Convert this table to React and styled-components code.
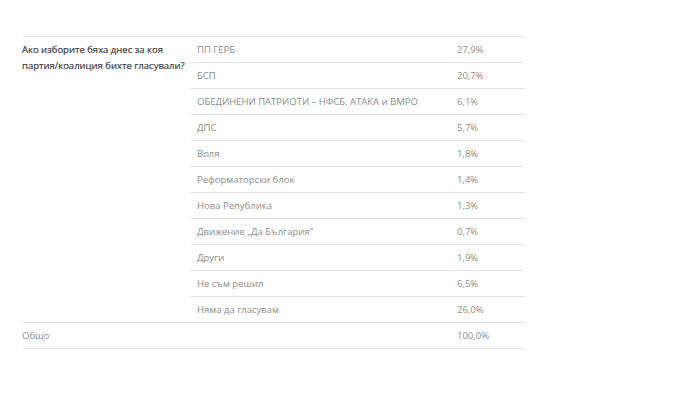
import React from 'react';
import styled, { createGlobalStyle } from 'styled-components';

const GlobalStyle = createGlobalStyle`
  body {
    margin: 0;
    background: #fff;
    font-family: "Open Sans", "Noto Sans", sans-serif;
  }
`;

const Wrapper = styled.div`
  padding: 36px 0 0 22px;
`;

const Table = styled.table`
  width: 503px;
  border-collapse: collapse;
  font-size: 9.5px;
  color: #8c8c8c;
`;

const Cell = styled.td`
  border-top: 1px solid #e3e3e3;
  height: 25px;
  padding: 0 0 0 ${p => p.$indent || 0}px;
  vertical-align: middle;
  white-space: nowrap;
`;

const Question = styled.td`
  border-top: 1px solid #e3e3e3;
  width: 168px;
  padding: 5px 0 0 0;
  vertical-align: top;
  color: #3c3c3c;
  line-height: 16px;
  white-space: nowrap;
  -webkit-text-stroke: 0.2px #3c3c3c;
`;

const Total = styled.tr`
  td {
    border-bottom: 1px solid #e3e3e3;
  }
`;

const rows = [
  ['ПП ГЕРБ', '27,9%'],
  ['БСП', '20,7%'],
  ['ОБЕДИНЕНИ ПАТРИОТИ – НФСБ, АТАКА и ВМРО', '6,1%'],
  ['ДПС', '5,7%'],
  ['Воля', '1,8%'],
  ['Реформаторски блок', '1,4%'],
  ['Нова Република', '1,3%'],
  ['Движение „Да България“', '0,7%'],
  ['Други', '1,9%'],
  ['Не съм решил', '6,5%'],
  ['Няма да гласувам', '26,0%'],
];

const App = () => {
  return (
    <Wrapper>
      <GlobalStyle />
      <Table>
        <tbody>
          {rows.map(([name, val], i) => (
            <tr key={name}>
              {i === 0 && (
                <Question rowSpan={rows.length}>
                  Ако изборите бяха днес за коя<br />партия/коалиция бихте гласували?
                </Question>
              )}
              <Cell $indent={7} style={{ width: 260 }}>{name}</Cell>
              <Cell>{val}</Cell>
            </tr>
          ))}
          <Total>
            <Cell>Общо</Cell>
            <Cell></Cell>
            <Cell>100,0%</Cell>
          </Total>
        </tbody>
      </Table>
    </Wrapper>
  );
};

export default App;
